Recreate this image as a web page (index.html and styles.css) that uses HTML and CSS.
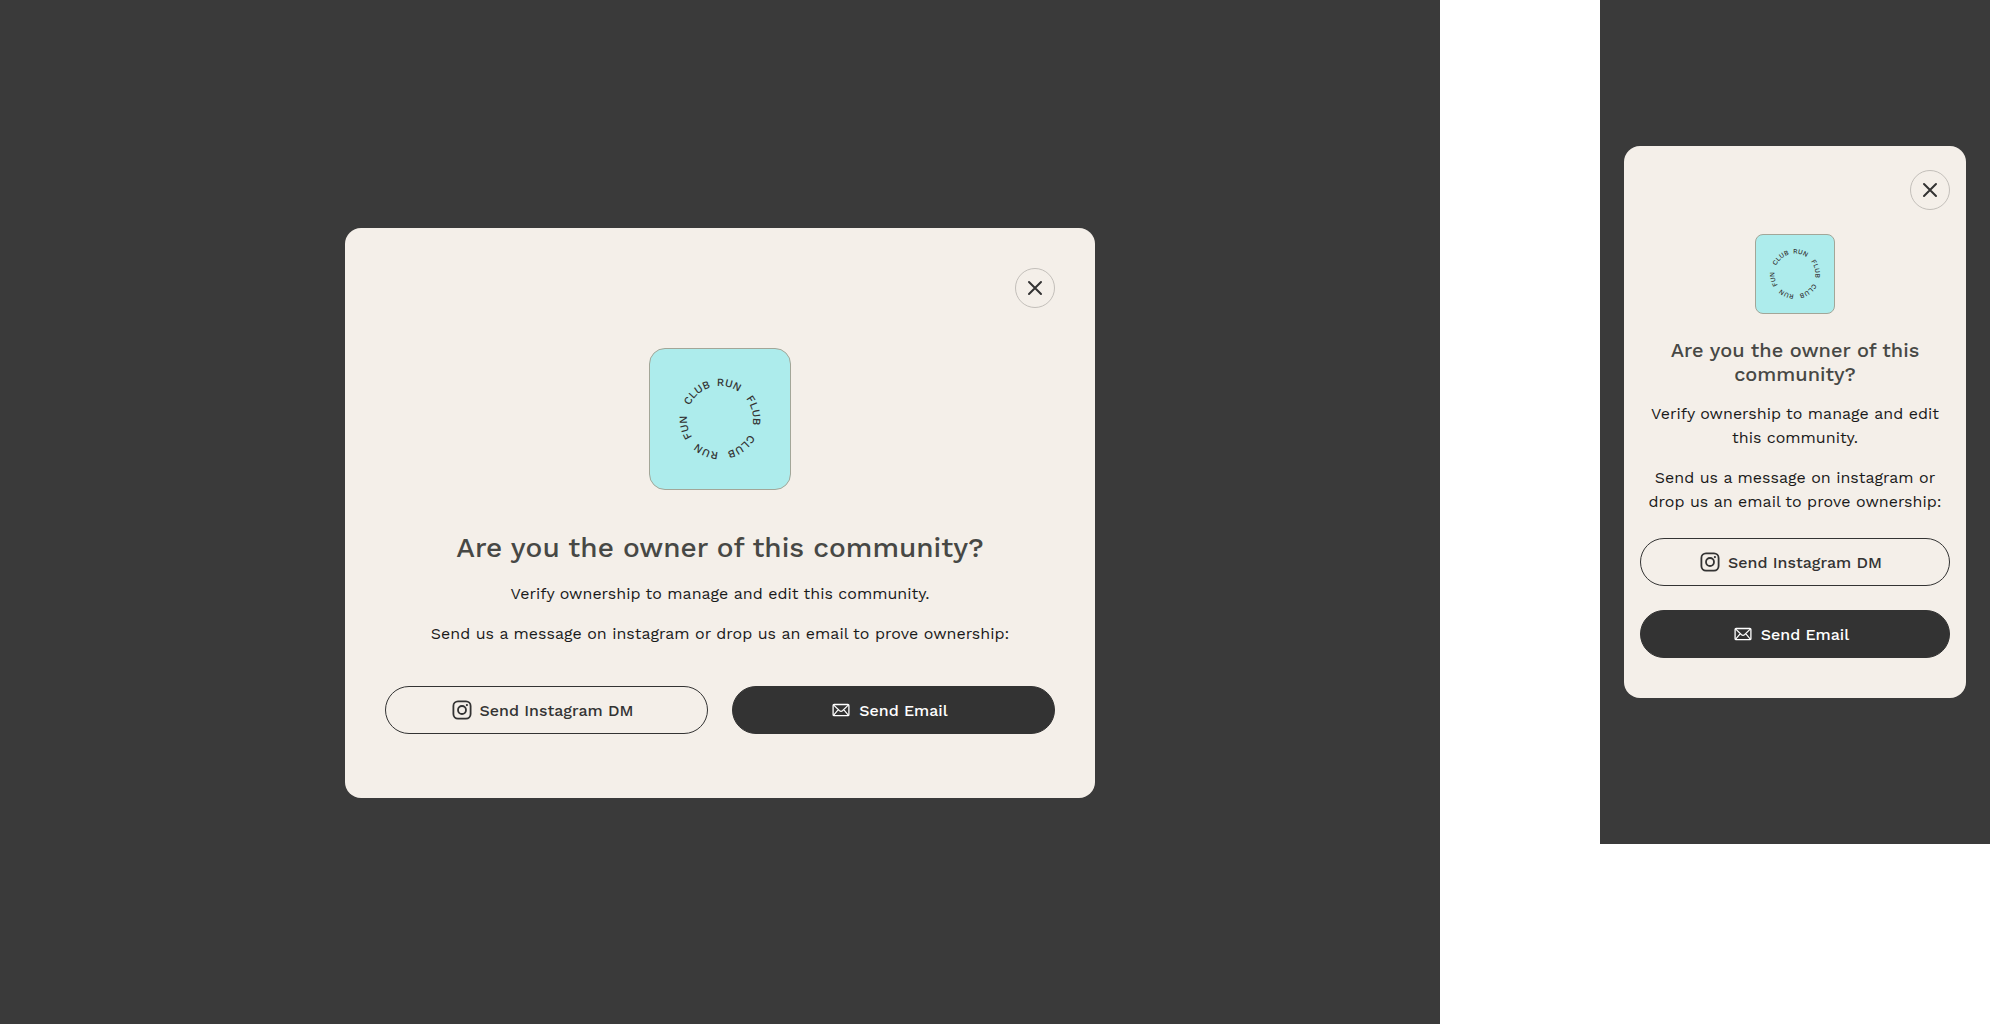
FILE: index.html
```html
<!DOCTYPE html>
<html lang="en">
<head>
    <meta charset="UTF-8">
    <meta name="viewport" content="width=device-width, initial-scale=1.0">
    <title>Verify Ownership</title>
    <link rel="stylesheet" href="styles.css">
</head>
<body>
    <svg class="sprite" aria-hidden="true">
        <symbol id="icon-close" viewBox="0 0 16 16">
            <path d="M2 2l12 12M14 2L2 14" fill="none" stroke="currentColor" stroke-width="2" stroke-linecap="round"/>
        </symbol>
        <symbol id="icon-instagram" viewBox="0 0 20 20">
            <rect x="1.4" y="1.4" width="17.2" height="17.2" rx="4.6" fill="none" stroke="currentColor" stroke-width="1.8"/>
            <circle cx="10" cy="10" r="4" fill="none" stroke="currentColor" stroke-width="1.8"/>
            <circle cx="14.9" cy="5.1" r="1.1" fill="currentColor"/>
        </symbol>
        <symbol id="icon-mail" viewBox="0 0 20 20">
            <rect x="2.1" y="4.5" width="15.8" height="11.2" rx="1" fill="none" stroke="currentColor" stroke-width="1.3"/>
            <path d="M2.5 4.9l6 5.8q1.5 1.2 3 0l6-5.8M2.5 15.3l4.8-5.6M17.5 15.3l-4.8-5.6" fill="none" stroke="currentColor" stroke-width="1.2"/>
        </symbol>
    </svg>

    <main class="page">
        <section class="screen desktop">
            <div class="modal" role="dialog" aria-labelledby="title-desktop">
                <button type="button" class="btn-close" aria-label="Close">
                    <svg><use href="#icon-close"/></svg>
                </button>
                <div class="logo">
                    <svg viewBox="0 0 100 100">
                        <path id="ring-desktop" d="M50 17a33 33 0 0 1 0 66a33 33 0 0 1 0-66" fill="none"/>
                        <text>
                            <textPath href="#ring-desktop" startOffset="4.1%">RUN</textPath>
                            <textPath href="#ring-desktop" startOffset="21.1%">FLUB</textPath>
                            <textPath href="#ring-desktop" startOffset="39.6%">CLUB</textPath>
                            <textPath href="#ring-desktop" startOffset="56.4%">RUN</textPath>
                            <textPath href="#ring-desktop" startOffset="71.2%">FUN</textPath>
                            <textPath href="#ring-desktop" startOffset="88.5%">CLUB</textPath>
                        </text>
                    </svg>
                </div>
                <h2 id="title-desktop">Are you the owner of this community?</h2>
                <p>Verify ownership to manage and edit this community.</p>
                <p>Send us a message on instagram or drop us an email to prove ownership:</p>
                <div class="actions">
                    <button type="button" class="btn btn-outline">
                        <svg><use href="#icon-instagram"/></svg>
                        Send Instagram DM
                    </button>
                    <button type="button" class="btn btn-dark">
                        <svg><use href="#icon-mail"/></svg>
                        Send Email
                    </button>
                </div>
            </div>
        </section>

        <section class="screen mobile">
            <div class="modal" role="dialog" aria-labelledby="title-mobile">
                <button type="button" class="btn-close" aria-label="Close">
                    <svg><use href="#icon-close"/></svg>
                </button>
                <div class="logo">
                    <svg viewBox="0 0 100 100">
                        <path id="ring-mobile" d="M50 17a33 33 0 0 1 0 66a33 33 0 0 1 0-66" fill="none"/>
                        <text>
                            <textPath href="#ring-mobile" startOffset="4.1%">RUN</textPath>
                            <textPath href="#ring-mobile" startOffset="21.1%">FLUB</textPath>
                            <textPath href="#ring-mobile" startOffset="39.6%">CLUB</textPath>
                            <textPath href="#ring-mobile" startOffset="56.4%">RUN</textPath>
                            <textPath href="#ring-mobile" startOffset="71.2%">FUN</textPath>
                            <textPath href="#ring-mobile" startOffset="88.5%">CLUB</textPath>
                        </text>
                    </svg>
                </div>
                <h2 id="title-mobile">Are you the owner of this community?</h2>
                <p>Verify ownership to manage and edit this community.</p>
                <p>Send us a message on instagram or drop us an email to prove ownership:</p>
                <div class="actions">
                    <button type="button" class="btn btn-outline">
                        <svg><use href="#icon-instagram"/></svg>
                        Send Instagram DM
                    </button>
                    <button type="button" class="btn btn-dark">
                        <svg><use href="#icon-mail"/></svg>
                        Send Email
                    </button>
                </div>
            </div>
        </section>
    </main>
</body>
</html>
```
FILE: styles.css
```css
* {
    box-sizing: border-box;
}

body {
    font-family: "Work Sans", Inter, sans-serif;
    font-size: 16px;
    line-height: 24px;
    margin: 0;
    color: #1a1a1a;
    background-color: #ffffff;
}

.sprite {
    display: none;
}

.page {
    display: flex;
    align-items: flex-start;
    gap: 160px;
    min-height: 100vh;
}

.screen {
    display: flex;
    justify-content: center;
    align-items: center;
    background-color: #3a3a3a;
}

.desktop {
    flex: 1;
    min-height: 100vh;
    padding: 42px 40px 40px;
}

.mobile {
    width: 390px;
    min-height: 844px;
    padding: 24px;
}

.modal {
    display: flex;
    flex-direction: column;
    align-items: center;
    width: 100%;
    max-width: 750px;
    padding: 40px 40px 64px;
    border-radius: 16px;
    background-color: #f4efe9;
    text-align: center;
}

.btn-close {
    display: flex;
    justify-content: center;
    align-items: center;
    align-self: flex-end;
    width: 40px;
    height: 40px;
    padding: 0;
    border: 1px solid #c3bfba;
    border-radius: 50%;
    background: none;
    color: #333333;
    cursor: pointer;
}

.btn-close svg {
    width: 16px;
    height: 16px;
}

.logo {
    display: flex;
    justify-content: center;
    align-items: center;
    width: 142px;
    height: 142px;
    margin: 40px 0;
    border: 1px solid #a3a698;
    border-radius: 16px;
    background-color: #adecec;
}

.logo svg {
    width: 100px;
    height: 100px;
}

.logo text {
    font-size: 11px;
    font-weight: 500;
    text-anchor: middle;
    fill: #333333;
}

h2 {
    margin: 0;
    font-size: 28px;
    line-height: 36px;
    font-weight: 500;
    color: #474845;
}

p {
    margin: 16px 0 0;
}

.actions {
    display: flex;
    gap: 24px;
    width: 100%;
    margin-top: 40px;
}

.btn {
    display: flex;
    flex: 1;
    justify-content: center;
    align-items: center;
    gap: 8px;
    height: 48px;
    padding: 0 24px 0 16px;
    border: 1px solid #333333;
    border-radius: 24px;
    font-family: inherit;
    font-size: 16px;
    font-weight: 500;
    cursor: pointer;
}

.btn svg {
    width: 20px;
    height: 20px;
}

.btn-outline {
    background: none;
    color: #333333;
}

.btn-dark {
    background-color: #333333;
    color: #ffffff;
}

.mobile .modal {
    padding: 24px 16px 40px;
}

.mobile .logo {
    width: 80px;
    height: 80px;
    margin: 24px 0;
    border-radius: 8px;
}

.mobile .logo svg {
    width: 62px;
    height: 62px;
}

.mobile h2 {
    font-size: 20px;
    line-height: 24px;
}

.mobile .actions {
    flex-direction: column;
    margin-top: 24px;
}

.mobile .btn {
    flex: none;
}
```
